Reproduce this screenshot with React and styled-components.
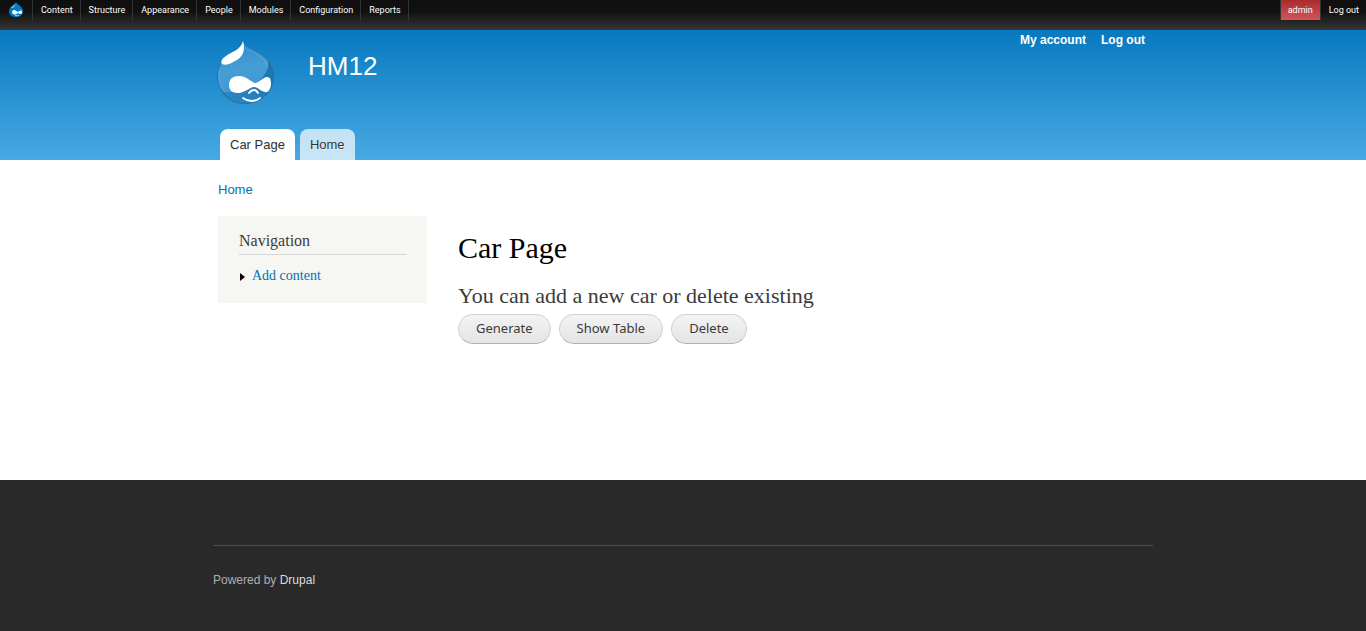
import React from 'react';
import styled, { createGlobalStyle } from 'styled-components';

const sans = '"Liberation Sans", Arial, sans-serif';
const serif = '"Liberation Serif", Georgia, serif';
const ui = '"Noto Sans", "Open Sans", sans-serif';

const GlobalStyle = createGlobalStyle`
  * { box-sizing: border-box; }
  html { background: #292929; }
  body { margin: 0; background: #292929; font-family: ${serif}; color: #3b3b3b; }
  a { text-decoration: none; }
  ul { list-style: none; margin: 0; padding: 0; }
`;

const Toolbar = styled.nav`
  display: flex;
  align-items: flex-start;
  justify-content: space-between;
  height: 30px;
  background: linear-gradient(#0f0f0f 0, #111 12px, #363636 30px);
  font: 9px/20px Roboto, ${sans};
`;

const ToolbarList = styled.ul`
  display: flex;
  padding-left: 1px;
  li { display: flex; border-right: 1px solid #333; }
`;

const ToolbarLink = styled.a`
  display: flex;
  align-items: center;
  height: 20px;
  padding: 0 7px 0 8px;
  color: #fff;
  white-space: nowrap;
`;

const UserLinks = styled.div`
  display: flex;
`;

const AdminLink = styled(ToolbarLink)`
  padding: 0 7px;
  border-left: 1px solid #333;
  border-right: 1px solid #333;
  background: linear-gradient(#aa2b2e, #d0555a);
`;

const Container = styled.div`
  width: 100%;
  max-width: 960px;
  margin: 0 auto;
  padding: 0 10px;
`;

const Header = styled.header`
  background: linear-gradient(#0779bf, #48a9e4);
`;

const HeaderInner = styled(Container)`
  display: flex;
  flex-direction: column;
  justify-content: space-between;
  min-height: 130px;
`;

const HeaderTop = styled.div`
  display: flex;
  align-items: flex-start;
`;

const LogoLink = styled.a`
  display: flex;
  padding: 10px 0 0 3px;
`;

const SiteName = styled.a`
  margin: 20px auto 0 33px;
  color: #fff;
  font: 26px/32px ${sans};
`;

const AccountMenu = styled.nav`
  display: flex;
  gap: 15px;
  padding-right: 8px;
  font: bold 12px/20px ${sans};
  a { color: #fff; }
`;

const Tabs = styled.nav`
  display: flex;
  gap: 5px;
  padding-left: 7px;
`;

const Tab = styled.a`
  padding: 0 10px;
  border-radius: 8px 8px 0 0;
  background: ${({ $active }) => ($active ? '#fff' : 'rgba(255, 255, 255, 0.7)')};
  color: #333;
  font: 13px/31px ${sans};
  text-shadow: 0 1px #eee;
`;

const Page = styled.div`
  min-height: 320px;
  background: #fff;
`;

const PageInner = styled(Container)`
  padding: 20px 15px;
`;

const Breadcrumb = styled.nav`
  font: 13px/20px ${sans};
  a { color: #0071b3; }
`;

const Columns = styled.div`
  display: flex;
  align-items: flex-start;
  gap: 31px;
  padding-top: 16px;
`;

const Sidebar = styled.aside`
  flex: 0 0 209px;
  padding: 15px 20px 17px 21px;
  background: #f6f6f2;
`;

const SidebarTitle = styled.h2`
  margin: 0 0 11px;
  padding-bottom: 3px;
  border-bottom: 1px solid #d6d6d6;
  font: 16px/20px ${serif};
`;

const MenuItem = styled.li`
  display: flex;
  align-items: center;
  gap: 7px;
  padding-left: 1px;
  font: 14px/20px ${serif};
  a { color: #0071b3; }
  svg { margin-top: 2px; }
`;

const Main = styled.main`
  flex: 1;
  padding-top: 14px;
`;

const Title = styled.h1`
  margin: 0;
  color: #000;
  font: 30px/36px ${serif};
`;

const Subtitle = styled.h2`
  margin: 18px 0 6px;
  font: 22px/24px ${serif};
`;

const Actions = styled.div`
  display: flex;
  gap: 8px;
`;

const ActionButton = styled.button`
  height: 30px;
  padding: 0 17px 2px;
  border: 1px solid #d2d2d2;
  border-bottom-color: #b0b0b0;
  border-radius: 15px;
  background: linear-gradient(#f3f3f3, #e4e4e4);
  color: #3a3a3a;
  font: 13px/20px ${ui};
  cursor: pointer;
`;

const Footer = styled.footer`
  padding-top: 65px;
  background: #292929;
`;

const FooterText = styled.p`
  margin: 0;
  padding: 24px 0 41px;
  border-top: 1px solid #4b4b4b;
  color: #b0b0b0;
  font: 12px/20px ${sans};
  a { color: #dcdcdc; }
`;

function Drop() {
  return (
    <svg width="59" height="65" viewBox="0 0 59 65" aria-hidden="true">
      <defs>
        <linearGradient id="dropBody" x1="0" y1="0" x2="0.2" y2="1">
          <stop offset="0" stopColor="#2287cb" />
          <stop offset="0.5" stopColor="#479ed6" />
          <stop offset="1" stopColor="#3a96d3" />
        </linearGradient>
        <linearGradient id="dropShade" x1="1" y1="0" x2="0" y2="1">
          <stop offset="0" stopColor="#1a73b0" />
          <stop offset="1" stopColor="#2c88c6" />
        </linearGradient>
        <clipPath id="dropClip">
          <path d="M27 0C28 5 33 7 39 10C45 13 49 16 52 20C56 25 58 30 58 36C58 52 45 64 29 64C13 64 1 52 1 36C1 29 3 24 7 20C10 16 13 14 16 12C21 9 26 6 27 0Z" />
        </clipPath>
      </defs>
      <g clipPath="url(#dropClip)">
        <path d="M0 0H59V65H0Z" fill="url(#dropBody)" />
        <path d="M52 20C53 28 50 34 44 40C36 49 21 55 3 51L6 65H59V20Z" fill="url(#dropShade)" />
        <path d="M27 0C28 5 33 7 39 10C45 13 49 16 52 20C56 25 58 30 58 36C58 52 45 64 29 64C13 64 1 52 1 36C1 29 3 24 7 20C10 16 13 14 16 12C21 9 26 6 27 0Z" fill="none" stroke="#2b739f" strokeWidth="2" />
      </g>
      <path d="M3 31C3 39 4 46 9 52M29 8C33 11 39 13 44 16C49 20 51 24 52 29" fill="none" stroke="#82bfe4" strokeOpacity="0.3" />
      <path d="M27 1C30 11 26 18 19 21C14 24 9 26 6 24C4 21 7 18 10 16C15 12 25 10 27 1Z" fill="#fff" />
      <path d="M23 36C30 36 34 41 39 43C43 43 47 37 51 37C55 37 55 41 55 45C54 50 52 53 49 52C44 51 42 47 38 47C34 47 29 53 22 53C16 53 13 50 13 45C13 39 17 36 23 36Z" fill="#fff" />
      <path d="M33 53C36 49 40 49 42 53M27 58C32 62 39 62 44 58" fill="none" stroke="#fff" strokeWidth="1.8" strokeLinecap="round" />
    </svg>
  );
}

function SmallDrop() {
  return (
    <svg width="16" height="16" viewBox="0 0 16 16" aria-hidden="true">
      <path d="M7 0C8 3 14 4 14 9C14 13 11 15 7 15C3 15 0 13 0 9C0 4 6 3 7 0Z" fill="#0778c4" />
      <path d="M6 2C5 4 3 5 2 6C4 6 6 5 6 2Z" fill="#b5dcf2" />
      <path d="M5 8C7 8 8 10 9 10C11 8 13 8 13 10C13 13 11 12 9 11C7 13 3 13 3 10C3 9 4 8 5 8Z" fill="#fff" />
      <path d="M6 13C8 14 9 14 10 13" fill="none" stroke="#c9e5f5" />
    </svg>
  );
}

const sections = ['Content', 'Structure', 'Appearance', 'People', 'Modules', 'Configuration', 'Reports'];

export default function App() {
  return (
    <>
      <GlobalStyle />
      <Toolbar aria-label="Administration">
        <ToolbarList>
          <li><ToolbarLink href="#" aria-label="Home"><SmallDrop /></ToolbarLink></li>
          {sections.map((name) => (
            <li key={name}><ToolbarLink href="#">{name}</ToolbarLink></li>
          ))}
        </ToolbarList>
        <UserLinks>
          <AdminLink href="#">admin</AdminLink>
          <ToolbarLink href="#">Log out</ToolbarLink>
        </UserLinks>
      </Toolbar>
      <Header>
        <HeaderInner>
          <HeaderTop>
            <LogoLink href="#" aria-label="Home"><Drop /></LogoLink>
            <SiteName href="#">HM12</SiteName>
            <AccountMenu aria-label="Account">
              <a href="#">My account</a>
              <a href="#">Log out</a>
            </AccountMenu>
          </HeaderTop>
          <Tabs aria-label="Main menu">
            <Tab href="#" $active>Car Page</Tab>
            <Tab href="#">Home</Tab>
          </Tabs>
        </HeaderInner>
      </Header>
      <Page>
        <PageInner>
          <Breadcrumb aria-label="Breadcrumb"><a href="#">Home</a></Breadcrumb>
          <Columns>
            <Sidebar>
              <SidebarTitle>Navigation</SidebarTitle>
              <ul>
                <MenuItem>
                  <svg width="5" height="8" viewBox="0 0 5 8" aria-hidden="true"><path d="M0 0L5 4L0 8Z" fill="#000" /></svg>
                  <a href="#">Add content</a>
                </MenuItem>
              </ul>
            </Sidebar>
            <Main>
              <Title>Car Page</Title>
              <Subtitle>You can add a new car or delete existing</Subtitle>
              <Actions>
                <ActionButton type="button">Generate</ActionButton>
                <ActionButton type="button">Show Table</ActionButton>
                <ActionButton type="button">Delete</ActionButton>
              </Actions>
            </Main>
          </Columns>
        </PageInner>
      </Page>
      <Footer>
        <Container>
          <FooterText>Powered by <a href="#">Drupal</a></FooterText>
        </Container>
      </Footer>
    </>
  );
}
